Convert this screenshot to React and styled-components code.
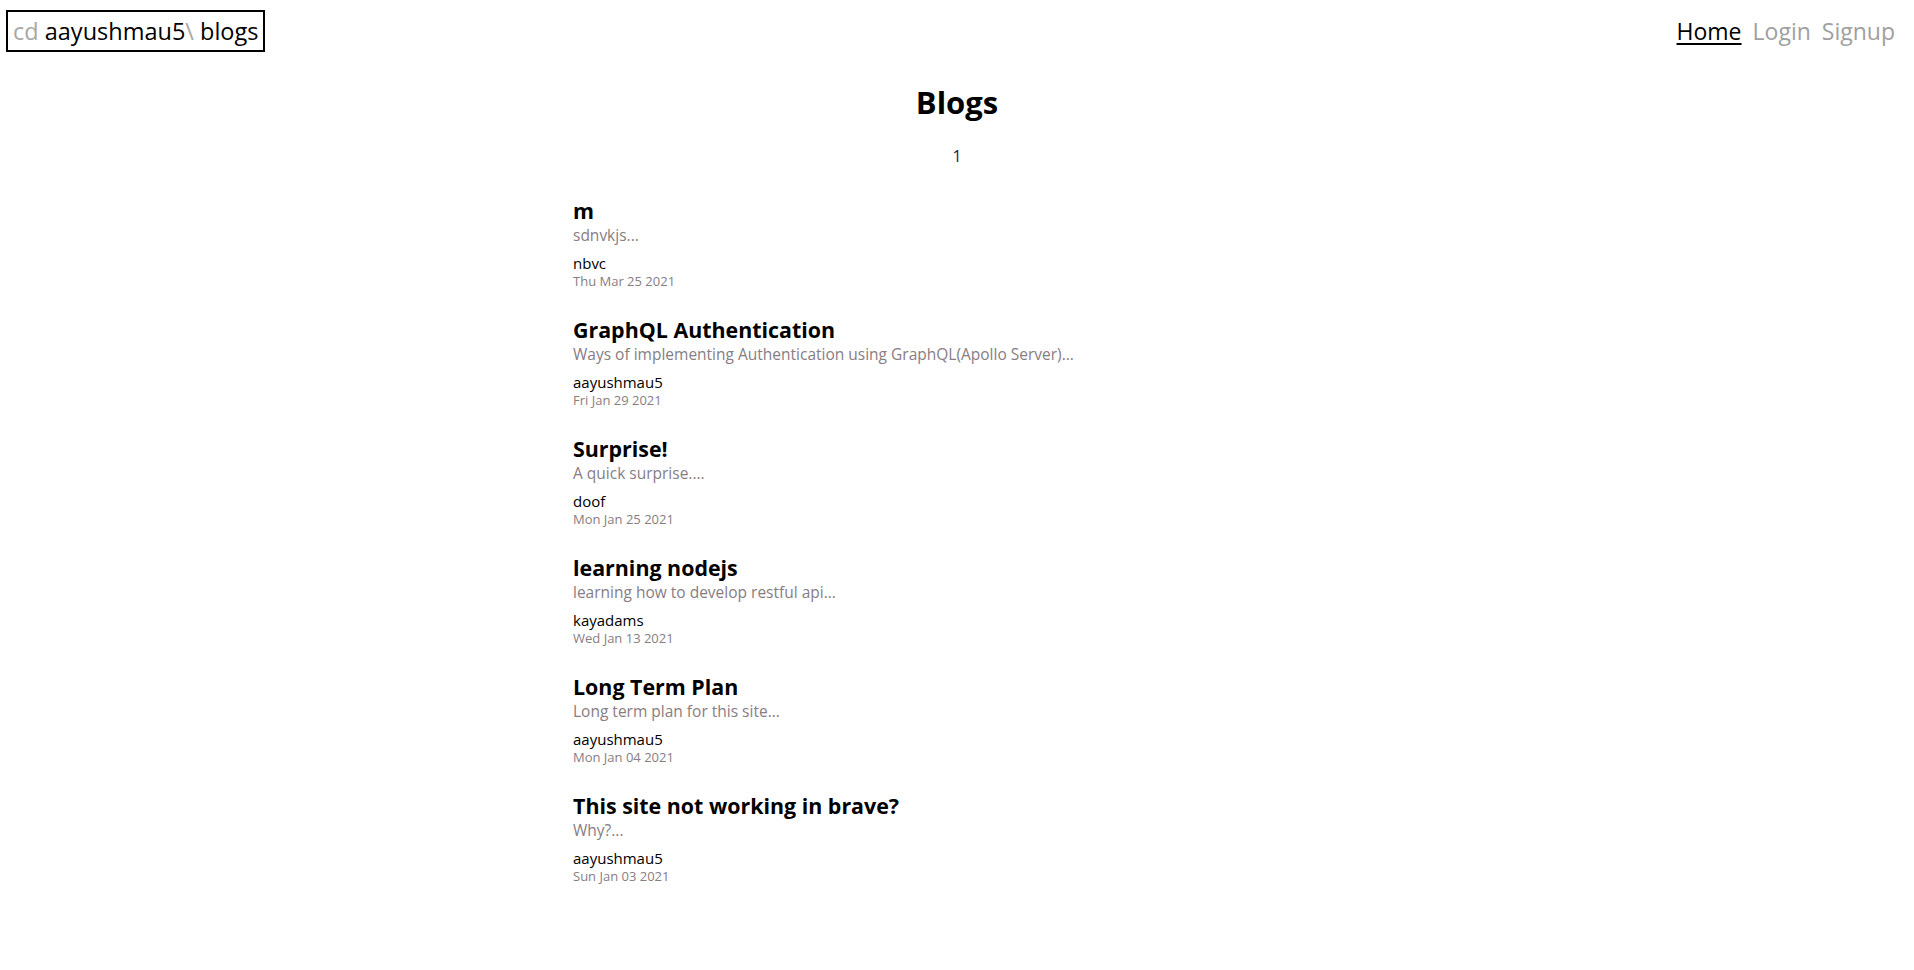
import React from 'react';
import styled, { createGlobalStyle } from 'styled-components';

const GlobalStyle = createGlobalStyle`
  html, body {
    margin: 0;
    padding: 0;
    background: #fff;
    font-family: "Open Sans", "Noto Sans", sans-serif;
    color: #000;
  }
`

const Header = styled.header`
  display: flex;
  justify-content: space-between;
  align-items: center;
  padding: 10px 19px 0 6px;
`

const Logo = styled.a`
  display: flex;
  align-items: center;
  height: 38px;
  padding: 0 5px;
  border: 2px solid #000;
  font-size: 23.5px;
  line-height: 38px;
  color: #000;
  text-decoration: none;
  white-space: pre;
`

const Dim = styled.span`
  color: #a8a8a8;
`

const Nav = styled.nav`
  display: flex;
  gap: 11px;
`

const NavLink = styled.a`
  font-size: 23px;
  line-height: 32px;
  color: ${p => (p.active ? '#000' : '#a0a0a0')};
  text-decoration: ${p => (p.active ? 'underline' : 'none')};
  text-underline-offset: 3px;
  text-decoration-thickness: 2px;
`

const Main = styled.main`
  max-width: 768px;
  margin: 0 auto;
`

const PageTitle = styled.h1`
  margin: 32px 0 0;
  text-align: center;
  font-size: 31px;
  line-height: 36px;
  font-weight: 700;
`

const Pagination = styled.div`
  display: flex;
  justify-content: center;
  margin-top: 26px;
`

const PageNum = styled.span`
  font-size: 16px;
  line-height: 20px;
  color: #1c1c3a;
`

const List = styled.div`
  margin-top: 30px;
`

const Item = styled.article`
  margin-bottom: 26px;
`

const Title = styled.h2`
  margin: 0;
  padding-top: 2px;
  font-size: 21.4px;
  line-height: 26px;
  font-weight: 700;
`

const Desc = styled.p`
  margin: -1px 0 0;
  font-size: 15.5px;
  line-height: 24px;
  color: #877d83;
`

const Author = styled.div`
  margin-top: 6px;
  font-size: 15px;
  line-height: 20px;
`

const DateText = styled.div`
  font-size: 13px;
  line-height: 16px;
  color: #877d83;
`

const blogs = [
  { title: 'm', desc: 'sdnvkjs...', author: 'nbvc', date: 'Thu Mar 25 2021' },
  { title: 'GraphQL Authentication', desc: 'Ways of implementing Authentication using GraphQL(Apollo Server)...', author: 'aayushmau5', date: 'Fri Jan 29 2021' },
  { title: 'Surprise!', desc: 'A quick surprise....', author: 'doof', date: 'Mon Jan 25 2021' },
  { title: 'learning nodejs', desc: 'learning how to develop restful api...', author: 'kayadams', date: 'Wed Jan 13 2021' },
  { title: 'Long Term Plan', desc: 'Long term plan for this site...', author: 'aayushmau5', date: 'Mon Jan 04 2021' },
  { title: 'This site not working in brave?', desc: 'Why?...', author: 'aayushmau5', date: 'Sun Jan 03 2021' },
]

export default function App() {
  return (
    <>
      <GlobalStyle />
      <Header>
        <Logo href="#">
          <Dim>cd </Dim>aayushmau5<Dim>\ </Dim>blogs
        </Logo>
        <Nav>
          <NavLink href="#" active>Home</NavLink>
          <NavLink href="#">Login</NavLink>
          <NavLink href="#">Signup</NavLink>
        </Nav>
      </Header>
      <Main>
        <PageTitle>Blogs</PageTitle>
        <Pagination>
          <PageNum>1</PageNum>
        </Pagination>
        <List>
          {blogs.map(b => (
            <Item key={b.title}>
              <Title>{b.title}</Title>
              <Desc>{b.desc}</Desc>
              <Author>{b.author}</Author>
              <DateText>{b.date}</DateText>
            </Item>
          ))}
        </List>
      </Main>
    </>
  )
}
